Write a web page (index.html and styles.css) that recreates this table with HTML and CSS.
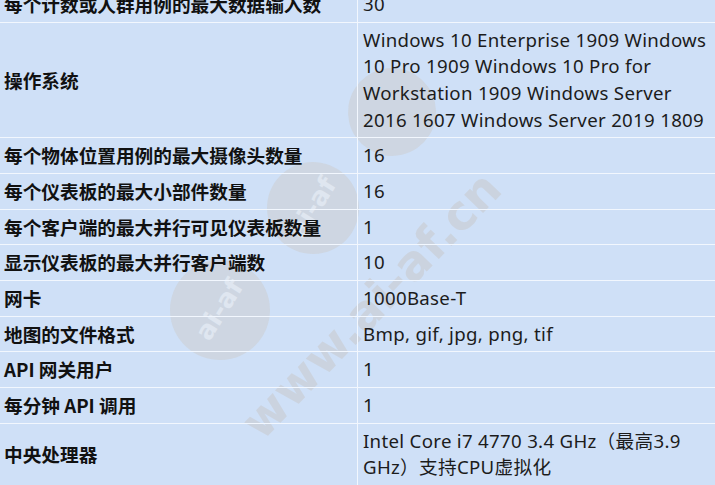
FILE: index.html
```html
<!DOCTYPE html>
<html>
  <head>
    <meta charset="UTF-8">
    <meta name="viewport" content="width=device-width, initial-scale=1.0">
    <title>规格参数</title>
    <link rel="stylesheet" href="styles.css">
  </head>
  <body>
    <div class="spec-wrap">
      <!-- watermark -->
      <svg class="watermark" width="715" height="485" viewBox="0 0 715 485">
        <g class="wm-badge" transform="translate(313 208) rotate(-58)">
          <circle r="46"></circle>
          <text x="0" y="8" text-anchor="middle">ai-af</text>
        </g>
        <g class="wm-badge" transform="translate(220 310) rotate(-58)">
          <circle r="50"></circle>
          <text x="0" y="8" text-anchor="middle">ai-af</text>
        </g>
        <g class="wm-badge" transform="translate(392 112) rotate(-58)">
          <circle r="44"></circle>
        </g>
        <text class="wm-url" transform="translate(262 442) rotate(-46)">www.ai-af.cn</text>
      </svg>

      <table class="spec-table">
        <tr>
          <th>每个计数或人群用例的最大数据输入数</th>
          <td>30</td>
        </tr>
        <tr>
          <th>操作系统</th>
          <td>Windows 10 Enterprise 1909 Windows 10 Pro 1909 Windows 10 Pro for Workstation 1909 Windows Server 2016 1607 Windows Server 2019 1809</td>
        </tr>
        <tr>
          <th>每个物体位置用例的最大摄像头数量</th>
          <td>16</td>
        </tr>
        <tr>
          <th>每个仪表板的最大小部件数量</th>
          <td>16</td>
        </tr>
        <tr>
          <th>每个客户端的最大并行可见仪表板数量</th>
          <td>1</td>
        </tr>
        <tr>
          <th>显示仪表板的最大并行客户端数</th>
          <td>10</td>
        </tr>
        <tr>
          <th>网卡</th>
          <td>1000Base-T</td>
        </tr>
        <tr>
          <th>地图的文件格式</th>
          <td>Bmp, gif, jpg, png, tif</td>
        </tr>
        <tr>
          <th>API 网关用户</th>
          <td>1</td>
        </tr>
        <tr>
          <th>每分钟 API 调用</th>
          <td>1</td>
        </tr>
        <tr>
          <th>中央处理器</th>
          <td>Intel Core i7 4770 3.4 GHz（最高3.9 GHz）支持CPU虚拟化</td>
        </tr>
      </table>
    </div>
  </body>
</html>
```

FILE: styles.css
```css
body {
  margin: 0;
  padding: 0;
  background-color: #cfe0f7;
  overflow: hidden;
}

.spec-wrap {
  position: relative;
  margin-top: -13px;
}

.spec-table {
  position: relative; /* fica por cima da marca d'água */
  z-index: 1;
  width: 100%;
  border-collapse: collapse;
  color: #1c1c1c;
  font-family: "Noto Sans", "Noto Sans CJK SC", sans-serif;
  font-size: 18.67px;
  line-height: 26.67px;
}

.spec-table th,
.spec-table td {
  border: 1px solid #f2f7fe;
  padding: 4px 5px 4px 4px;
  text-align: left;
  vertical-align: middle;
}

.spec-table th {
  width: 348px;
  font-family: "Noto Sans CJK SC", sans-serif;
  font-weight: bold;
  color: #111;
}

.spec-table td {
  font-weight: normal;
  padding-left: 5px;
  letter-spacing: 0.3px;
}

.spec-table tr:first-child th,
.spec-table tr:first-child td {
  border-top: none;
}

.spec-table th:first-child {
  border-left: none;
}

.spec-table td:last-child {
  border-right: none;
}

.watermark {
  position: absolute;
  left: 0;
  top: 13px;
  z-index: 0;
  pointer-events: none;
}

.wm-badge circle {
  fill: #cdd3dc;
  opacity: 0.8;
}

.wm-badge text {
  fill: #dfe6f0;
  font-family: "DejaVu Sans", sans-serif;
  font-weight: bold;
  font-size: 26px;
}

.wm-url {
  fill: #cbd1da;
  opacity: 0.8;
  font-family: "DejaVu Sans", sans-serif;
  font-weight: bold;
  font-size: 48px;
}
```
